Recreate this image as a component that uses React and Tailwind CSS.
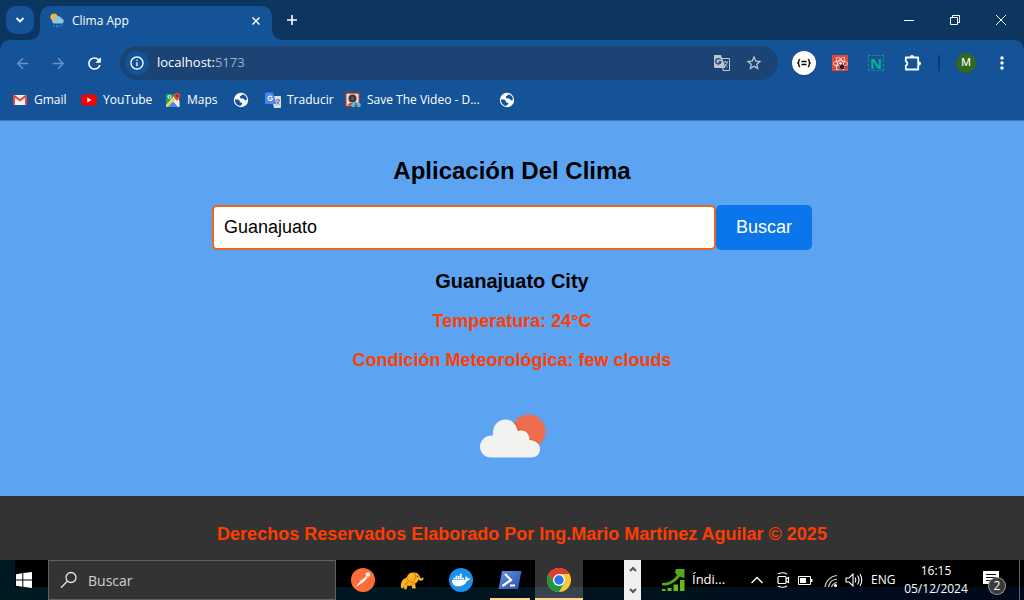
import React, { useState } from "react";
import { MdRefresh, MdStarBorder, MdArrowBack, MdArrowForward, MdInfoOutline, MdMoreVert } from "react-icons/md";
import { FaDocker, FaReact } from "react-icons/fa";

const ui = "font-['Open_Sans','Noto_Sans',sans-serif]";

function WeatherFavicon() {
  return (
    <svg className="h-4 w-4 shrink-0" viewBox="0 0 16 16" aria-hidden="true">
      <circle cx="4" cy="4" r="3.600" fill="#f9b52c" />
      <path d="M4.500 10.500a2.600 2.600 0 0 1 .2-5.200 3.600 3.600 0 0 1 6.800.3 2.600 2.600 0 0 1 .6 5z" fill="#8fc4dc" />
      <path d="M4 12v1.500M7 12v2.500M10 12v1.500M12.500 11.500v1" stroke="#4e8fc8" strokeWidth="1.200" />
    </svg>
  );
}

function GmailIcon() {
  return (
    <svg className="h-4 w-4 shrink-0" viewBox="0 0 16 16" aria-hidden="true">
      <path d="M1.500 3h13v10h-13z" fill="#f2f2f2" />
      <path d="M1 13.200V3.200c.8-.8 1.400-.5 2 0L8 7l5-3.800c.6-.5 1.200-.8 2 0v10h-2V5.800L8 9.600 3 5.800v7.400z" fill="#dd4b3e" />
    </svg>
  );
}

function YouTubeIcon() {
  return (
    <svg className="h-4 w-4 shrink-0" viewBox="0 0 16 16" aria-hidden="true">
      <rect x="0.300" y="2.500" width="15.400" height="11" rx="3" fill="#f00" />
      <path d="M6.300 5.600v4.800L10.500 8z" fill="#fff" />
    </svg>
  );
}

function MapsIcon() {
  return (
    <svg className="h-4 w-4 shrink-0" viewBox="0 0 16 16" aria-hidden="true">
      <rect x="1" y="2" width="13" height="13" rx="1" fill="#e8e8e8" />
      <path d="M1 3q0-1 1-1h9L1 13z" fill="#23a05a" />
      <path d="M2 15l6-6 6 6z" fill="#4688f1" />
      <path d="M1 14L13 2l1 2L3 15z" fill="#f5c834" />
      <path d="M8 9l5 6h1.500V9l-3-2z" fill="#eee" />
      <circle cx="4.500" cy="5" r="1.500" fill="none" stroke="#fff" />
      <path d="M12 10c0-2.500-3-3.500-3-6.200a3 3 0 0 1 6.200 0C15.200 6.500 12 7.500 12 10z" fill="#dc4437" />
      <circle cx="12.100" cy="3.800" r="1.100" fill="#7d2018" />
    </svg>
  );
}

function GlobeIcon() {
  return (
    <svg className="h-4 w-4 shrink-0" viewBox="0 0 16 16" aria-hidden="true">
      <circle cx="8" cy="8" r="7.200" fill="#fff" />
      <path d="M9.500 2.300C9 4 7 3.500 6.800 5.100c-.1 1.300 1.200 1.400 2.900 1.500 1.700.1 1.500 1.800 2.600 1.900L14 7.500A6.200 6.200 0 0 0 9.500 2.300zM1.900 7.500c1.600 0 3.300-.2 4.200.6 1 .9.200 2.100 1.600 2.400 1.500.2 1.800.5 1.500 1.600-.2.800-1.700.5-1.500 1.900A6.100 6.100 0 0 1 1.900 7.500z" fill="#155399" />
    </svg>
  );
}

function TranslateIcon() {
  return (
    <svg className="h-4 w-4 shrink-0" viewBox="0 0 16 16" aria-hidden="true">
      <path d="M6 4h9q1 0 1 1v10q0 1-1 1H9z" fill="#d9dce1" />
      <path d="M1 0.500h7L11.500 12H1q-1 0-1-1V1.500q0-1 1-1z" fill="#4c86ec" />
      <path d="M7.200 5.200A2.200 2.200 0 1 0 7.500 6.700H5.500" fill="none" stroke="#fff" strokeWidth="1.100" />
      <path d="M11 8h4M12.700 7v1M14.300 8c-.5 2.300-1.400 3.500-2.500 4.500M12 9.500c.5 1.500 1.200 2.200 2.400 3" fill="none" stroke="#6a737e" />
    </svg>
  );
}

function SaveVideoIcon() {
  return (
    <svg className="h-4 w-4 shrink-0" viewBox="0 0 16 16" aria-hidden="true">
      <rect x="0.700" y="1" width="13.600" height="13.500" fill="#ead9d2" stroke="#943c2b" strokeWidth="1.400" />
      <circle cx="7.500" cy="6.500" r="4" fill="#373b40" />
      <circle cx="7.500" cy="6.500" r="1.200" fill="#b54d3b" />
      <path d="M2 13.500l3-2.500h3l1 2.500z" fill="#c4432e" />
      <path d="M7.500 15a2 2 0 0 1 .5-3.800 2.800 2.800 0 0 1 5 0 2 2 0 0 1 1.500 3.800z" fill="#63bdd5" />
      <path d="M11 11v4m-1.500-1.500L11 15l1.500-1.500" fill="none" stroke="#264e61" />
    </svg>
  );
}

const bookmarks = [
  { label: "Gmail", icon: GmailIcon, width: "w-[69px]" },
  { label: "YouTube", icon: YouTubeIcon, width: "w-[84px]" },
  { label: "Maps", icon: MapsIcon, width: "w-[68px]" },
  { label: "", icon: GlobeIcon, width: "w-[32px]" },
  { label: "Traducir", icon: TranslateIcon, width: "w-[80px]" },
  { label: "Save The Video - D...", icon: SaveVideoIcon, width: "w-[154px]" },
  { label: "", icon: GlobeIcon, width: "w-[32px]" },
];

function TabStrip() {
  return (
    <div className="flex h-10 items-start bg-[#0c3560] text-white">
      <button aria-label="Buscar pestañas" className="mt-1.5 ml-1.5 flex h-7 w-7 items-center justify-center rounded-[10px] bg-[#155399]">
        <svg className="h-2.5 w-2.5" viewBox="0 0 10 10" fill="none" stroke="currentColor" strokeWidth="1.800"><path d="M1.500 3L5 6.500 8.500 3" /></svg>
      </button>
      <div className="relative mt-1.5 ml-1.5 flex h-[34px] w-[232px] items-center rounded-t-[10px] bg-[#155399] px-2.5 pb-1">
        <svg className="absolute bottom-0 -left-2.5 h-2.5 w-2.5" viewBox="0 0 10 10"><path d="M10 0v10H0A10 10 0 0 0 10 0z" fill="#155399" /></svg>
        <svg className="absolute -right-2.5 bottom-0 h-2.5 w-2.5" viewBox="0 0 10 10"><path d="M0 0v10h10A10 10 0 0 1 0 0z" fill="#155399" /></svg>
        <WeatherFavicon />
        <span className="ml-1.5 grow text-[12px]">Clima App</span>
        <button aria-label="Cerrar pestaña" className="p-0.5">
          <svg className="h-2 w-2" viewBox="0 0 8 8" stroke="currentColor" strokeWidth="1.500"><path d="M.5.5l7 7m0-7l-7 7" /></svg>
        </button>
      </div>
      <button aria-label="Nueva pestaña" className="mt-1.5 ml-1.5 flex h-7 w-7 items-center justify-center">
        <svg className="h-2.5 w-2.5" viewBox="0 0 10 10" stroke="currentColor" strokeWidth="1.600"><path d="M5 0v10M0 5h10" /></svg>
      </button>
      <div className="ml-auto flex">
        <button aria-label="Minimizar" className="flex h-10 w-[46px] items-center justify-center">
          <svg className="h-2.5 w-2.5" viewBox="0 0 10 10"><path d="M0 5h10v1H0z" fill="#fff" /></svg>
        </button>
        <button aria-label="Restaurar" className="flex h-10 w-[46px] items-center justify-center">
          <svg className="h-2.5 w-2.5" viewBox="0 0 10 10" fill="none" stroke="currentColor"><path d="M.5 2.500h7v7h-7zM2.500 2.500v-2h7v7h-2" /></svg>
        </button>
        <button aria-label="Cerrar" className="flex h-10 w-[46px] items-center justify-center">
          <svg className="h-2.5 w-2.5" viewBox="0 0 10 10" stroke="currentColor"><path d="M0 0l10 10M10 0L0 10" /></svg>
        </button>
      </div>
    </div>
  );
}

function ToolButton({ label, children, className = "" }) {
  return <button aria-label={label} className={"flex h-9 w-9 shrink-0 items-center justify-center " + className}>{children}</button>;
}

function Toolbar() {
  return (
    <div className="bg-[#0c3560]">
      <div className="flex h-[46px] items-center rounded-t-[10px] bg-[#155399] px-1 text-white">
        <ToolButton label="Atrás" className="text-[#6c93c3]"><MdArrowBack size={17} /></ToolButton>
        <ToolButton label="Adelante" className="text-[#6c93c3]"><MdArrowForward size={17} /></ToolButton>
        <ToolButton label="Recargar"><MdRefresh size={19} /></ToolButton>
        <div className="ml-2 flex h-[34px] grow items-center rounded-full bg-[#1b4474] px-[5px]">
          <button aria-label="Información del sitio" className="flex h-6 w-6 items-center justify-center rounded-full bg-[#155399]"><MdInfoOutline size={16} /></button>
          <div role="textbox" aria-label="Dirección" tabIndex={0} className="ml-2 grow text-[13px]">localhost:<span className="text-[#a0b3cb]">5173</span></div>
          <button aria-label="Traducir página" className="flex w-8 justify-center text-[#bec5ce]">
            <svg className="h-[18px] w-[18px]" viewBox="0 0 18 18" aria-hidden="true">
              <path d="M1 1h7l1 3h7q1 0 1 1v11q0 1-1 1h-6l-1-3H2q-1 0-1-1z" fill="currentColor" />
              <path d="M9.500 5H16v11h-5l-1-2h2.500z" fill="#1b4474" />
              <path d="M7.600 5.700A2.700 2.700 0 1 0 8 8H5.400" fill="none" stroke="#1b4474" strokeWidth="1.300" />
              <path d="M10.500 8H15M12.500 7v1M14.300 8c-.4 2.200-1.600 3.600-3 4.600M11.500 9.500q1 2 3 3.500" fill="none" stroke="currentColor" />
            </svg>
          </button>
          <button aria-label="Añadir a marcadores" className="mr-[3px] flex w-8 justify-center text-[#c5ccd5]"><MdStarBorder size={18} /></button>
        </div>
        <div className="ml-2 flex items-center">
          <ToolButton label="JSON">
            <span className="flex h-6 w-6 items-center justify-center rounded-full bg-white text-black shadow">
              <svg className="h-3.5 w-3.5" viewBox="0 0 14 14" fill="none" stroke="currentColor" strokeWidth="1.300"><path d="M3.200 3.500Q1.800 3.500 1.900 5T.5 7Q2 7.200 1.900 9t1.300 1.500M10.800 3.500q1.400 0 1.300 1.500T13.500 7Q12 7.200 12.100 9t-1.300 1.500" /><path d="M4.500 5.500h5M4.500 8.500h5" /></svg>
            </span>
          </ToolButton>
          <ToolButton label="React">
            <span className="relative flex h-4 w-4 items-center justify-center bg-[#df4b3b]">
              <FaReact size={15} />
              <svg className="absolute right-0.5 bottom-px h-2 w-2" viewBox="0 0 10 10"><ellipse cx="5" cy="6" rx="2.600" ry="3.300" fill="#222" /><path d="M1 3l8 6M9 3L1 9M0 6h10" stroke="#222" /></svg>
            </span>
          </ToolButton>
          <ToolButton label="Notas">
            <span className="flex h-4 w-4 items-center justify-center border border-dashed border-[#12918d] text-[15px] leading-none font-bold text-[#0bae88]">N</span>
          </ToolButton>
          <ToolButton label="Extensiones">
            <svg className="h-[18px] w-[18px]" viewBox="0 0 18 18" aria-hidden="true">
              <path d="M2.800 3.500h12.400v12H2.800v-3.800a2.300 2.300 0 0 0 0-4.400z" fill="none" stroke="currentColor" strokeWidth="1.800" strokeLinejoin="round" />
              <path d="M7 3a2 2 0 0 1 4 0zM16 7.500a2 2 0 0 1 0 4z" fill="currentColor" />
            </svg>
          </ToolButton>
          <span className="mx-2 h-4 w-0.5 bg-[#0f3c70]" />
          <ToolButton label="Perfil"><span className="flex h-5 w-5 items-center justify-center rounded-full bg-[#33691e] font-[Roboto,sans-serif] text-[11px]">M</span></ToolButton>
          <ToolButton label="Menú"><MdMoreVert size={20} /></ToolButton>
        </div>
      </div>
    </div>
  );
}

function Bookmarks() {
  return (
    <nav aria-label="Marcadores" className="flex h-[35px] items-center border-b border-[#4279b5] bg-[#155399] pb-1.5 pl-3 text-[12px] text-white">
      {bookmarks.map(({ label, icon: Icon, width }, i) => (
        <a key={i} href="#bookmark" aria-label={label || "Sitio web"} className={"flex h-6 shrink-0 items-center gap-1.5 whitespace-nowrap " + width}>
          <Icon />
          {label}
        </a>
      ))}
    </nav>
  );
}

function FewClouds() {
  return (
    <svg className="h-11 w-[68px]" viewBox="-2 0 68 44" role="img" aria-label="few clouds">
      <clipPath id="sun"><circle cx="48.500" cy="17.500" r="17" /></clipPath>
      <circle cx="48.500" cy="17.500" r="17" fill="#ec6e4c" />
      <path d="M11 43a11 11 0 0 1 1-22C12 4 35 0 38 16q9-2 11.500 9.500Q59 27 60 34q0 8-9 9z" fill="none" stroke="#e45528" strokeWidth="1.500" clipPath="url(#sun)" />
      <path d="M11 43.500C4 43.500 0 38 0 32.500 0 26 6 21 13 21.500 12 12 18 5.500 25.500 5.500c6 0 11 4.500 12.200 11.500 6.300-2.500 12 2 11.800 9 6 0 10.500 3.500 10.500 9 0 5-4 8.500-9 8.500z" fill="#f2f2f1" />
    </svg>
  );
}

function WeatherApp() {
  const [city, setCity] = useState("Guanajuato");
  return (
    <>
      <main className="flex grow flex-col items-center bg-[#5ca4f2] px-5 pt-8 text-black">
        <h1 className="text-[24px] leading-9 font-bold">Aplicación Del Clima</h1>
        <form className="mt-4 flex w-full max-w-[600px]" onSubmit={(e) => e.preventDefault()}>
          <input aria-label="Ciudad" value={city} onChange={(e) => setCity(e.target.value)} className="h-[45px] min-w-0 grow rounded-[5px] border-2 border-[#f26419] bg-white px-2.5 text-[18px] outline-none" />
          <button className="h-[45px] w-24 rounded-[5px] bg-[#0b76eb] text-[18px] text-white">Buscar</button>
        </form>
        <h2 className="mt-4 text-[20px] leading-[30px] font-bold">Guanajuato City</h2>
        <p className="mt-3 text-[18px] leading-[27px] font-bold text-[#ff3d00]">Temperatura: 24°C</p>
        <p className="mt-3 mb-10 text-[18px] leading-[27px] font-bold text-[#ff3d00]">Condición Meteorológica: few clouds</p>
        <div className="pb-9"><FewClouds /></div>
      </main>
      <footer className="flex h-16 items-center justify-center bg-[#333] pt-3 pl-5 text-[18px] font-bold text-[#ff3d00]">
        <p>Derechos Reservados Elaborado Por Ing.Mario Martínez Aguilar © 2025</p>
      </footer>
    </>
  );
}

function PostmanIcon() {
  return (
    <svg className="h-6 w-6" viewBox="0 0 24 24" aria-hidden="true">
      <circle cx="12" cy="12" r="12" fill="#ff6c37" />
      <circle cx="17" cy="6.500" r="2.200" fill="#fff" />
      <path d="M15 8.200l1.500 1.500-5 5.200-2-.8-.6-1z" fill="#fff" />
      <path d="M9.500 13.500L5.500 18.500l5.500-4" fill="#fff" stroke="#fff" strokeWidth=".8" />
      <path d="M10 12.500l4-3.500" stroke="#ff6c37" strokeWidth=".7" />
    </svg>
  );
}

function ElephantIcon() {
  return (
    <svg className="h-6 w-6" viewBox="0 0 24 24" aria-hidden="true">
      <path d="M1 20c-.5-4 .5-9 5-10l1-1c.5-3 3.500-5 7-4.500 3.500 0 5 2 6 4.500 1 2 2 1.500 2.300.5l1.500.6c-.5 2.800-3.500 3.500-5.500 1.400-.3 2-1.500 3.400-3.200 3.900l.7 5.100h-3.500l-.8-3c-1.500.5-3 .5-4 0l-1 3.700H4l.2-3-1.200 2z" fill="#f9b51c" />
      <path d="M7 9.500c0 4 3.500 5.300 7 4.300M14.500 5c2 2 1.500 5.500-.5 7.500M5 17l3-3M12 17l2-3" fill="none" stroke="#ed781a" strokeWidth="1.100" />
      <circle cx="17.500" cy="8.500" r=".7" fill="#553000" />
    </svg>
  );
}

function PowerShellIcon() {
  return (
    <svg className="h-5 w-6" viewBox="0 0 24 20" aria-hidden="true">
      <defs><linearGradient id="ps" x2="1" y2="1"><stop stopColor="#6492e5" /><stop offset="1" stopColor="#254eaa" /></linearGradient></defs>
      <path d="M4 1h19.500L20 19H.5z" fill="url(#ps)" />
      <path d="M7 4l6 6-8.500 6M12 15.500h5" fill="none" stroke="#fff" strokeWidth="2.200" />
    </svg>
  );
}

function ChromeIcon() {
  return (
    <svg className="h-6 w-6" viewBox="0 0 48 48" aria-hidden="true">
      <circle cx="24" cy="24" r="24" fill="#fcc934" />
      <path d="M3.200 12a24 24 0 0 1 41.600 0H24L13.600 30z" fill="#e33b2e" />
      <path d="M3.200 12L13.600 30H34.400L24 48A24 24 0 0 1 3.200 12z" fill="#229342" />
      <circle cx="24" cy="24" r="12" fill="#fff" />
      <circle cx="24" cy="24" r="9.500" fill="#2878ed" />
    </svg>
  );
}

const apps = [
  { name: "Postman", icon: <PostmanIcon /> },
  { name: "TablePlus", icon: <ElephantIcon /> },
  { name: "Docker", icon: <span className="flex h-6 w-6 items-center justify-center rounded-full bg-[#1c90ed] text-white"><FaDocker size={18} /></span> },
  { name: "PowerShell", icon: <PowerShellIcon />, running: true },
  { name: "Chrome", icon: <ChromeIcon />, active: true },
];

function Taskbar() {
  return (
    <div className="flex h-10 shrink-0 items-stretch bg-black bg-[linear-gradient(to_right,#001a24,#00131e_60%,#00081c)] bg-[length:100%_13px] bg-bottom bg-no-repeat text-white">
      <button aria-label="Inicio" className="flex w-12 items-center justify-center bg-[linear-gradient(#001a24,#001a24)] bg-[length:15px_100%] bg-no-repeat">
        <svg className="h-4 w-4" viewBox="0 0 16 16" fill="#fff"><path d="M0 2.200L6.300 1.300v6.200H0zM7.300 1.100L16 0v7.500H7.300zM0 8.500h6.300v6.200L0 13.800zM7.300 8.500H16V16l-8.700-1.200z" /></svg>
      </button>
      <label className="flex w-72 items-center border border-[#606060] bg-[#333] pl-[11px]">
        <svg className="h-[18px] w-[18px]" viewBox="0 0 18 18" fill="none" stroke="#e5e5e5" strokeWidth="1.300"><circle cx="11" cy="6.500" r="5" /><path d="M7.300 10.300L1 16.700" /></svg>
        <input aria-label="Buscar" placeholder="Buscar" className="ml-2.5 min-w-0 grow bg-transparent text-[14px] outline-none placeholder:text-[#d0d0d0]" />
      </label>
      <div className="ml-[3px] flex gap-px">
        {apps.map((app) => (
          <button key={app.name} aria-label={app.name} className={"flex w-12 flex-col items-center " + (app.active ? "bg-[linear-gradient(#333_27px,#38434c_27px)]" : "")}>
            <span className="flex h-[38px] items-center pt-0.5">{app.icon}</span>
            {(app.active || app.running) && <span className={"h-0.5 bg-[#fad98b] " + (app.active ? "w-12" : "w-10")} />}
          </button>
        ))}
      </div>
      <div className="ml-auto flex w-[17px] flex-col justify-between bg-[#f0f0f0] text-[#555]">
        <button aria-label="Subir" className="flex h-[18px] items-center justify-center"><svg className="h-2 w-2" viewBox="0 0 8 8" fill="none" stroke="currentColor" strokeWidth="2"><path d="M1 6l3-3 3 3" /></svg></button>
        <button aria-label="Bajar" className="flex h-[18px] items-center justify-center"><svg className="h-2 w-2" viewBox="0 0 8 8" fill="none" stroke="currentColor" strokeWidth="2"><path d="M1 2l3 3 3-3" /></svg></button>
      </div>
      <div className="flex w-[383px] items-center">
        <button className="ml-5 flex w-20 items-center gap-[7px] text-left text-[13px]">
          <svg className="h-6 w-6" viewBox="0 0 24 24" aria-hidden="true">
            <path d="M1 21h3.500v2H1zM6.500 20h4v3h-4zM12.500 16.500h4.500V23h-4.500zM19 12h4.500v11H19z" fill="#62be12" />
            <path d="M1 15c7 0 12-3.500 15-8l-2-2.500L15 1h8.500v9l-2.500-.5-2-1C14 15 8 18 1 17.500z" fill="#55a817" />
          </svg>
          Índi...
        </button>
        <button aria-label="Mostrar iconos ocultos" className="flex w-8 justify-center">
          <svg className="h-3.5 w-3.5" viewBox="0 0 14 14" fill="none" stroke="#fff" strokeWidth="1.400"><path d="M1.500 10L7 4.500 12.500 10" /></svg>
        </button>
        <button aria-label="Reunirse ahora" className="flex w-5 justify-center">
          <svg className="h-4 w-3.5" viewBox="0 0 14 16" fill="none" stroke="#fff" strokeWidth="1.200"><path d="M2 2Q6.500-.5 11 2M2 14q4.500 2.500 9 0" /><rect x="2" y="4.500" width="8" height="7" rx="1" /><path d="M10 7l2.500-1.500v5L10 9" /></svg>
        </button>
        <button aria-label="Batería" className="flex w-6 justify-center">
          <svg className="h-4 w-4" viewBox="0 0 16 16" fill="none"><path d="M1.500 4.500h12v8h-12z" stroke="#fff" /><path d="M3 6h6v5H3zM14 7h1.500v3H14z" fill="#fff" /></svg>
        </button>
        <button aria-label="Red" className="ml-1 flex w-5 justify-center">
          <svg className="h-4 w-4" viewBox="0 0 16 16" fill="none" stroke="#d0d0d0" strokeWidth="1.200"><path d="M2 15A13 13 0 0 1 14 3.500M5.500 15A10 10 0 0 1 14 7M8.500 15A7 7 0 0 1 14 10.500" /><circle cx="12.500" cy="13.500" r="1.600" fill="#fff" stroke="none" /></svg>
        </button>
        <button aria-label="Volumen" className="flex w-[26px] justify-center">
          <svg className="h-4 w-[18px]" viewBox="0 0 18 16" fill="none" stroke="#fff" strokeWidth="1.100"><path d="M1 6h3l4-4v12l-4-4H1zM10 5.500q1.500 2.500 0 5M12.500 3.500q3 4.500 0 9M15 2q3.500 6 0 12" /></svg>
        </button>
        <button className="ml-1 w-[31px] text-left text-[12px]">ENG</button>
        <div className="flex w-[68px] flex-col items-center text-[12px] leading-[18px]"><time>16:15</time><time>05/12/2024</time></div>
        <button aria-label="2 notificaciones" className="relative ml-[13px] h-7 w-7">
          <svg className="h-7 w-7" viewBox="0 0 28 28"><path d="M0 5h16v13h-6l-4 4v-4H0z" fill="#fff" /><path d="M3 8.500h10M3 11.500h10M3 14.500h7" stroke="#111" /></svg>
          <span className="absolute top-3 left-1.5 flex h-4 w-4 items-center justify-center rounded-full bg-[#3b3b3b] text-[12px] ring-1 ring-[#999]">2</span>
        </button>
        <span className="ml-auto h-full w-[5px] border-l border-[#5a6370]" />
      </div>
    </div>
  );
}

export default function App() {
  return (
    <div className="flex min-h-screen flex-col font-['Liberation_Sans',Arial,sans-serif]">
      <header className={ui}>
        <TabStrip />
        <Toolbar />
        <Bookmarks />
      </header>
      <WeatherApp />
      <div className={ui}><Taskbar /></div>
    </div>
  );
}
